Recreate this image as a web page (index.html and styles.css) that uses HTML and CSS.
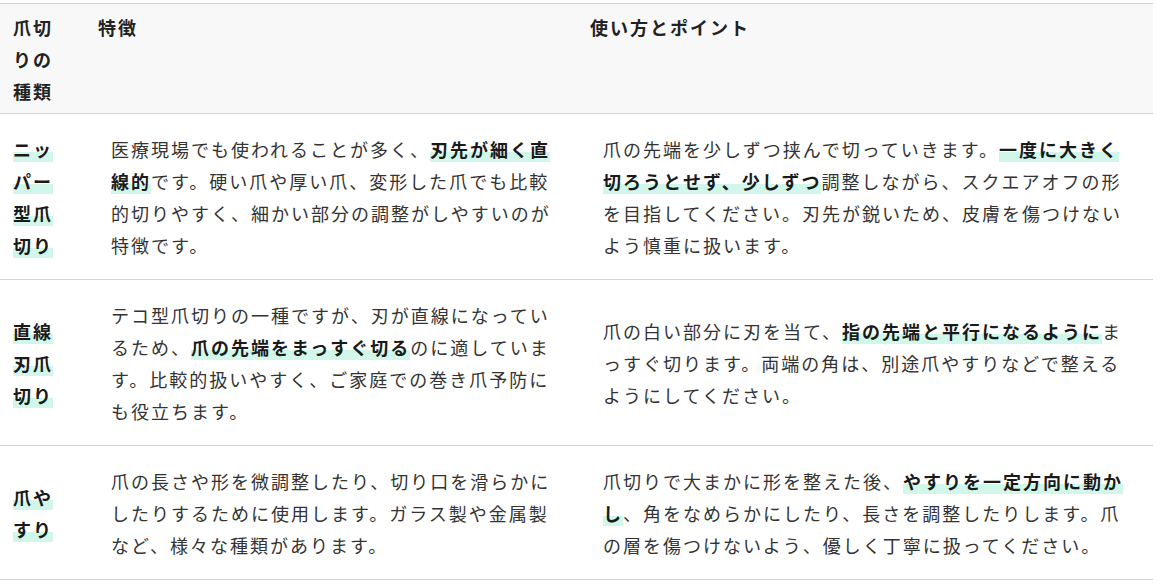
FILE: index.html
```html
<!DOCTYPE html>
<html lang="ja">
<head>
<meta charset="utf-8">
<title>爪切りの種類</title>
<link rel="stylesheet" href="styles.css">
</head>
<body>
<div class="wrap">
  <table class="nail-table">
    <colgroup>
      <col class="c-type">
      <col class="c-feature">
      <col class="c-usage">
    </colgroup>
    <thead>
      <tr>
        <th class="th-type">爪切りの種類</th>
        <th>特徴</th>
        <th>使い方とポイント</th>
      </tr>
    </thead>
    <tbody>
      <tr>
        <td class="td-type"><strong class="mark">ニッパー型爪切り</strong></td>
        <td class="td-text">医療現場でも使われることが多く、<strong class="mark">刃先が細く直線的</strong>です。硬い爪や厚い爪、変形した爪でも比較的切りやすく、細かい部分の調整がしやすいのが特徴です。</td>
        <td class="td-text">爪の先端を少しずつ挟んで切っていきます。<strong class="mark">一度に大きく切ろうとせず、少しずつ</strong>調整しながら、スクエアオフの形を目指してください。刃先が鋭いため、皮膚を傷つけないよう慎重に扱います。</td>
      </tr>
      <tr>
        <td class="td-type"><strong class="mark">直線刃爪切り</strong></td>
        <td class="td-text">テコ型爪切りの一種ですが、刃が直線になっているため、<strong class="mark">爪の先端をまっすぐ切る</strong>のに適しています。比較的扱いやすく、ご家庭での巻き爪予防にも役立ちます。</td>
        <td class="td-text">爪の白い部分に刃を当て、<strong class="mark">指の先端と平行になるように</strong>まっすぐ切ります。両端の角は、別途爪やすりなどで整えるようにしてください。</td>
      </tr>
      <tr>
        <td class="td-type"><strong class="mark">爪やすり</strong></td>
        <td class="td-text">爪の長さや形を微調整したり、切り口を滑らかにしたりするために使用します。ガラス製や金属製など、様々な種類があります。</td>
        <td class="td-text">爪切りで大まかに形を整えた後、<strong class="mark">やすりを一定方向に動かし</strong>、角をなめらかにしたり、長さを調整したりします。爪の層を傷つけないよう、優しく丁寧に扱ってください。</td>
      </tr>
    </tbody>
  </table>
</div>
</body>
</html>
```

FILE: styles.css
```css
html, body {
  margin: 0;
  padding: 0;
  background: #ffffff;
}

body {
  font-family: "Noto Sans CJK JP", "Noto Sans", sans-serif;
  font-size: 18px;
  color: #333333;
}

.wrap {
  padding: 3px 8px 0 0;
}

.nail-table {
  width: 1153px;
  border-collapse: collapse;
  table-layout: fixed;
  letter-spacing: 2px;
  line-height: 32px;
}

.c-type { width: 86px; }
.c-feature { width: 492px; }
.c-usage { width: 575px; }

.nail-table thead tr {
  background: #f8f8f8;
  border-top: 1px solid #d3d3d3;
  border-bottom: 1px solid #d3d3d3;
}

.nail-table th {
  text-align: left;
  vertical-align: top;
  font-weight: 700;
  color: #222222;
  padding: 7px 12px 6px 12px;
}

.nail-table th.th-type {
  padding-right: 24px;
  padding-left: 13px;
}

.nail-table tbody tr {
  border-bottom: 1px solid #d3d3d3;
}

.nail-table td {
  vertical-align: middle;
  padding: 18.5px 25px;
}

.nail-table td.td-type {
  padding-left: 13px;
  padding-right: 24px;
}

.mark {
  font-weight: 700;
  color: #1a1a1a;
  background: linear-gradient(transparent 62%, #d0f7ea 62%);
}
```
